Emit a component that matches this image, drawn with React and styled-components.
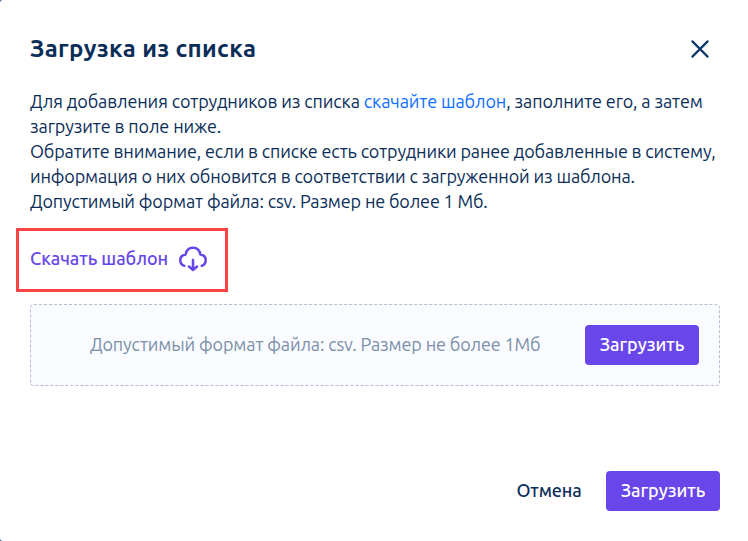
import React from 'react';
import styled, { createGlobalStyle } from 'styled-components';

const GlobalStyle = createGlobalStyle`
  * {
    box-sizing: border-box;
  }
  body {
    margin: 0;
    background: #356098;
    font-family: Ubuntu, 'Noto Sans', sans-serif;
    color: #0b2e59;
  }
`;

const Modal = styled.div`
  height: 541px;
  padding: 30px 28px 30px 30px;
  display: flex;
  flex-direction: column;
  background: #fff;
  border-radius: 3px 0 0 3px;
`;

const Header = styled.header`
  height: 38px;
  display: flex;
  align-items: center;
  justify-content: space-between;
`;

const Title = styled.h1`
  margin: 0;
  font-size: 24px;
  font-weight: 700;
  line-height: 38px;
  white-space: nowrap;
  letter-spacing: 0.35px;
`;

const CloseButton = styled.button`
  width: 40px;
  height: 38px;
  padding: 0;
  border: 0;
  background: none;
  color: #0f3868;
  cursor: pointer;

  & svg {
    display: block;
    margin: 0 auto;
  }
`;

const Description = styled.div`
  margin-top: 21px;
  font-size: 18px;
  line-height: 25px;
`;

const Line = styled.p`
  margin: 0;
  white-space: nowrap;
  letter-spacing: ${({ $spacing }) => $spacing || -0.16}px;
`;

const Link = styled.a`
  color: #0f6fff;
  text-decoration: none;
`;

const TemplateButton = styled.button`
  width: 212px;
  height: 64px;
  margin: 14px 0 0 -14px;
  padding: 0 0 2px 11px;
  display: flex;
  align-items: center;
  gap: 11px;
  border: 3px solid #fb4245;
  background: none;
  color: #6646e8;
  font-family: inherit;
  font-size: 18px;
  font-weight: 500;
  text-align: left;
  white-space: nowrap;
  cursor: pointer;

  & span {
    width: 138px;
    padding-bottom: 2px;
    letter-spacing: -0.05px;
  }
  & svg {
    flex: none;
  }
`;

const DropZone = styled.div`
  height: 82px;
  margin-top: 12px;
  padding: 0 20px 0 59px;
  display: flex;
  align-items: center;
  justify-content: space-between;
  border: 1px dashed #b4bfd2;
  border-radius: 4px;
  background: #f9fbfe;
`;

const Hint = styled.span`
  padding-bottom: 2px;
  color: #7c90ab;
  font-size: 18px;
  white-space: nowrap;
  letter-spacing: -0.14px;
`;

const Button = styled.button`
  width: 114px;
  height: 40px;
  padding: 0 0 2px;
  border: 0;
  border-radius: 4px;
  background: ${({ $ghost }) => ($ghost ? 'none' : '#6846e9')};
  color: ${({ $ghost }) => ($ghost ? '#0b2e59' : '#fff')};
  font-family: inherit;
  font-size: 18px;
  font-weight: 500;
  line-height: 38px;
  white-space: nowrap;
  letter-spacing: ${({ $ghost }) => ($ghost ? '-0.15px' : 'normal')};
  cursor: pointer;
`;

const Footer = styled.footer`
  margin-top: auto;
  display: flex;
  justify-content: flex-end;
`;

const CloseIcon = () => (
  <svg width="20" height="20" viewBox="0 0 20 20" fill="none">
    <path
      d="M2.4 2.4L17.6 17.6M17.6 2.4L2.4 17.6"
      stroke="currentColor"
      strokeWidth="2.2"
      strokeLinecap="round"
    />
  </svg>
);

const CloudDownloadIcon = () => (
  <svg width="28" height="26" viewBox="0 0 28 26" fill="none">
    <path
      d="M5.3 19.8C3 18.9 1.3 16.8 1.3 14.2C1.3 11 3.7 8.9 6.6 8.5C7.3 4.4 10.2 1.8 14 1.8C17.8 1.8 20.7 4.4 21.4 8.5C24.3 8.9 26.7 11 26.7 14.2C26.7 16.8 25 18.9 22.7 19.8M14 14V24M10 20.5L14 24L18 20.5"
      stroke="currentColor"
      strokeWidth="2.5"
      strokeLinecap="round"
      strokeLinejoin="round"
    />
  </svg>
);

const App = () => (
  <>
    <GlobalStyle />
    <Modal>
      <Header>
        <Title>Загрузка из списка</Title>
        <CloseButton type="button" aria-label="Закрыть">
          <CloseIcon />
        </CloseButton>
      </Header>
      <Description>
        <Line $spacing={-0.12}>
          Для добавления сотрудников из списка{' '}
          <Link href="#">скачайте шаблон</Link>, заполните его, а затем
        </Line>
        <Line $spacing={-0.12}>загрузите в поле ниже.</Line>
        <Line>
          Обратите внимание, если в списке есть сотрудники ранее добавленные в
          систему,
        </Line>
        <Line>
          информация о них обновится в соответствии с загруженной из шаблона.
        </Line>
        <Line>Допустимый формат файла: csv. Размер не более 1 Мб.</Line>
      </Description>
      <TemplateButton type="button">
        <span>Скачать шаблон</span>
        <CloudDownloadIcon />
      </TemplateButton>
      <DropZone>
        <Hint>Допустимый формат файла: csv. Размер не более 1Мб</Hint>
        <Button type="button">Загрузить</Button>
      </DropZone>
      <Footer>
        <Button type="button" $ghost>
          Отмена
        </Button>
        <Button type="button">Загрузить</Button>
      </Footer>
    </Modal>
  </>
);

export default App;
